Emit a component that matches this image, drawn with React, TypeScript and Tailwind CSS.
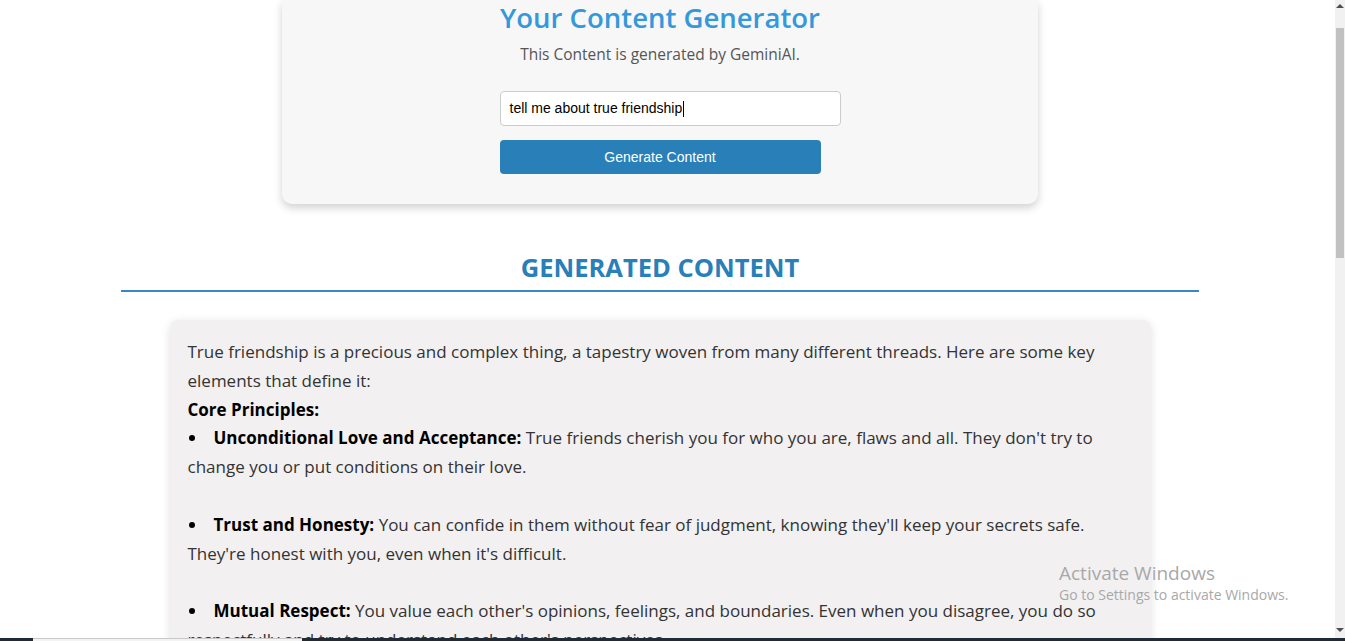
import React from "react";

const seg = { fontFamily: '"Open Sans", "Noto Sans", sans-serif' };
const arial = { fontFamily: '"Liberation Sans", Arial, sans-serif' };

function Bullet({ title, children }: { title: string; children: React.ReactNode }) {
  return (
    <div>
      <span className="inline-block w-[26px] align-middle">
        <span className="ml-[1px] mb-[3px] block h-[6px] w-[6px] rounded-full bg-black" />
      </span>
      <b className="font-bold text-black">{title}</b> {children}
    </div>
  );
}

export default function App() {
  return (
    <div className="flex h-[641px] w-[1345px] flex-col overflow-hidden bg-white" style={seg}>
      <div className="flex h-[638px] w-full">
        <div className="relative w-[1335px] overflow-hidden">
          <div className="w-[1320px]">
            {/* Top card */}
            <div className="mx-auto flex w-[756px] flex-col items-center rounded-b-[10px] bg-[#f7f7f7] pb-[30px] shadow-[0_4px_8px_rgba(0,0,0,0.18)]">
              <h1 className="text-[27.5px] font-semibold leading-[36px] text-[#3498db]">Your Content Generator</h1>
              <p className="mt-[6px] text-[15.5px] leading-[24px] text-[#555]">This Content is generated by GeminiAI.</p>
              <div className="mt-[25px] w-[321px]" style={arial}>
                <div className="flex h-[35px] w-[341px] items-center rounded-[4px] border border-[#ccc] bg-white pl-[9px] text-[14px] text-black">
                  tell me about true friendship
                  <span className="ml-[1px] inline-block h-[16px] w-px bg-black" />
                </div>
                <div className="mt-[14px] flex h-[34px] w-[321px] items-center justify-center rounded-[4px] bg-[#2980b9] text-[14px] text-white">
                  Generate Content
                </div>
              </div>
            </div>

            {/* Generated content heading */}
            <h2 className="mt-[45px] text-center text-[25.5px] font-bold leading-[36px] text-[#2980b9]">
              GENERATED CONTENT
            </h2>
            <div className="mx-auto mt-[5px] h-[2px] w-[1078px] bg-[#3b87c4]" />

            {/* Content card */}
            <div className="mx-auto mt-[28px] w-[981px] rounded-[8px] bg-[#f2f0f1] px-[18px] pt-[18px] pb-[30px] text-[17px] leading-[28.8px] text-[#333] shadow-[0_2px_10px_rgba(0,0,0,0.12)]">
              <p>
                True friendship is a precious and complex thing, a tapestry woven from many different threads. Here are some key elements that define it:
              </p>
              <p className="font-bold text-black">Core Principles:</p>
              <Bullet title="Unconditional Love and Acceptance:">
                True friends cherish you for who you are, flaws and all. They don't try to change you or put conditions on their love.
              </Bullet>
              <div className="h-[28.8px]" />
              <Bullet title="Trust and Honesty:">
                You can confide in them without fear of judgment, knowing they'll keep your secrets safe. They're honest with you, even when it's difficult.
              </Bullet>
              <div className="h-[28.8px]" />
              <Bullet title="Mutual Respect:">
                You value each other's opinions, feelings, and boundaries. Even when you disagree, you do so respectfully and try to understand each other's perspectives.
              </Bullet>
            </div>
          </div>

          {/* Windows watermark overlay */}
          <div className="pointer-events-none absolute left-[1059px] top-[561px] text-[#a8a8a8]">
            <div className="text-[19px] leading-[24px]">Activate Windows</div>
            <div className="text-[14px] leading-[20px]">Go to Settings to activate Windows.</div>
          </div>
        </div>

        {/* Scrollbar */}
        <div className="flex w-[10px] flex-col items-center bg-[#f1f1f1]">
          <div className="mt-[4px] h-0 w-0 border-x-[4px] border-b-[4px] border-x-transparent border-b-[#505050]" />
          <div className="mt-[20px] h-[230px] w-[8px] bg-[#c1c1c1]" />
          <div className="flex-1" />
          <div className="mb-[6px] h-0 w-0 border-x-[4px] border-t-[4px] border-x-transparent border-t-[#505050]" />
        </div>
      </div>

      {/* Taskbar edge */}
      <div className="flex h-[3px] w-full bg-[#1f2b36]">
        <div className="w-[33px]" />
        <div className="w-[269px] border-t border-[#c8c8c8] bg-[#f3f3f3]" />
      </div>
    </div>
  );
}
